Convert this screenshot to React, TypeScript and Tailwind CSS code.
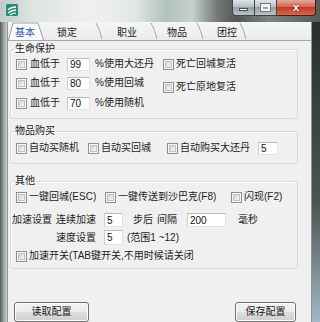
import React from "react";

const tabs = [
  { label: "基本", w: 36, wc: "w-[36px]", pc: "pl-[7px]", active: true },
  { label: "锁定", w: 59, wc: "w-[59px]", pc: "pl-[13px]", active: false },
  { label: "职业", w: 55, wc: "w-[55px]", pc: "pl-[14px]", active: false },
  { label: "物品", w: 46, wc: "w-[46px]", pc: "pl-[9px]", active: false },
  { label: "团控", w: 43, wc: "w-[43px]", pc: "pl-[13px]", active: false },
];

const CheckBox = () => (
  <span className="flex h-[11px] w-[11px] shrink-0 border border-[#8e8f8f] bg-[#f6f6f6] p-[1px]">
    <span className="h-full w-full border border-[#c2c2c2] bg-[linear-gradient(135deg,#d3d3d3,#f7f7f7)]" />
  </span>
);

const Field = ({ value, className }: { value: string; className: string }) => (
  <input
    readOnly
    value={value}
    className={`border border-[#dfe3e8] border-t-[#b7bcc3] border-l-[#c9cdd3] bg-white pl-[2px] text-[10px] leading-[10px] text-[#111] outline-none ${className}`}
  />
);

const Check = ({ label, className = "" }: { label: string; className?: string }) => (
  <div className={`flex items-center ${className}`}>
    <CheckBox />
    <span className="ml-[2px] whitespace-nowrap">{label}</span>
  </div>
);

const TitleBar = () => (
  <div className="flex h-[22px] items-start bg-[linear-gradient(90deg,#c3ccc9_0%,#dde3e1_10%,#eef1f0_28%,#e2e7e5_42%,#b2c2bb_52%,#c6d1cc_60%,#737875_68%,#535856_74%,#7d8481_84%,#555a58_100%)]">
    <svg width="14" height="14" viewBox="0 0 14 14" className="ml-[5px] mt-[3px]">
      <rect x="0.5" y="0.5" width="13" height="13" rx="2" fill="#2a8a78" stroke="#b8e4da" />
      <path d="M3 7 Q6 4 11 4" stroke="#fff" strokeWidth="1.3" fill="none" />
      <path d="M3 10 Q7 7 11 7" stroke="#fff" strokeWidth="1.3" fill="none" />
      <path d="M5 12 Q8 10 11 10" stroke="#fff" strokeWidth="1.2" fill="none" />
    </svg>
    <div className="ml-auto mr-[4px] flex">
      <div className="flex h-[16px] w-[23px] items-center justify-center rounded-bl-[4px] border border-t-0 border-[#3d4447] bg-[linear-gradient(#dfe4e6,#b3bbbf_50%,#959fa4_50%,#bac3c7)]">
        <span className="mt-[3px] h-[3px] w-[9px] border border-[#4a4f52] bg-white" />
      </div>
      <div className="flex h-[16px] w-[22px] items-center justify-center border-b border-r border-[#3d4447] bg-[linear-gradient(#dfe4e6,#b3bbbf_50%,#959fa4_50%,#bac3c7)]">
        <span className="h-[7px] w-[9px] border-2 border-t-[3px] border-[#f4f4f4] outline outline-1 outline-[#70777a]" />
      </div>
      <div className="flex h-[16px] w-[39px] items-center justify-center rounded-br-[4px] border-b border-r border-[#4a1a14] bg-[linear-gradient(#e8a597,#d0604f_50%,#bf3a28_50%,#d86a4d)]">
        <span className="text-[11px] font-bold leading-[11px] text-white [text-shadow:0_0_2px_#5a1008]">x</span>
      </div>
    </div>
  </div>
);

const Tabs = () => (
  <div className="flex h-[19px] items-end border-b border-[#a3a9ad] bg-[linear-gradient(#f4f5f5,#ececec)]">
    {tabs.map((t) => (
      <div key={t.label} className={`relative flex h-[18px] items-end pb-[1px] ${t.wc} ${t.pc}`}>
        <svg width={t.w} height="18" className="absolute left-0 top-0">
          {t.active ? (
            <path
              d={`M0.5 18 L5 1 L${t.w - 6} 1 L${t.w - 0.5} 18`}
              fill="#fbfbfb"
              stroke="#9aa0a4"
            />
          ) : (
            <path d={`M${t.w - 7} 1 Q${t.w - 3} 8 ${t.w - 1} 17`} fill="none" stroke="#a2a7aa" />
          )}
        </svg>
        <span className={`relative ${t.active ? "text-[#2a4fb4]" : ""}`}>{t.label}</span>
      </div>
    ))}
  </div>
);

const groupCls =
  "ml-[2px] w-[288px] rounded-[3px] border border-[#d5dbdf] pb-[8px] shadow-[inset_1px_1px_0_#fff]";

export default function App() {
  return (
    <div className="flex h-[322px] w-[320px] flex-col overflow-hidden font-['Liberation_Sans','Noto_Sans_CJK_SC',sans-serif] text-[10px] leading-[12px] text-[#1c1c1c]">
      <TitleBar />
      <div className="flex flex-1">
        <div className="w-[7px] bg-[linear-gradient(90deg,#545b58,#8d9693_40%,#c8d0d3)]" />
        <div className="flex w-[305px] flex-col border-x border-[#8e989d] bg-[#f0f0f0]">
          <Tabs />
          <div className="flex flex-col">
            <fieldset className={`mt-[2px] ${groupCls}`}>
              <legend className="ml-[3px] px-[1px]">生命保护</legend>
              <div className="mt-[2px] flex">
                <div className="flex w-[152px] flex-col pl-[5px]">
                  {[
                    ["99", "%使用大还丹", "mt-0"],
                    ["80", "%使用回城", "mt-[5px]"],
                    ["70", "%使用随机", "mt-[6px]"],
                  ].map(([v, l, m]) => (
                    <div key={v} className={`flex h-[14px] items-center ${m}`}>
                      <CheckBox />
                      <span className="ml-[3px] w-[37px]">血低于</span>
                      <Field value={v} className="h-[13px] w-[23px]" />
                      <span className="ml-[5px]">{l}</span>
                    </div>
                  ))}
                </div>
                <div className="flex flex-col">
                  <Check label="死亡回城复活" className="h-[14px]" />
                  <Check label="死亡原地复活" className="mt-[9px] h-[14px]" />
                </div>
              </div>
            </fieldset>

            <fieldset className={`mt-[6px] ${groupCls}`}>
              <legend className="ml-[3px] px-[1px]">物品购买</legend>
              <div className="mt-[4px] flex h-[14px] items-center pl-[5px]">
                <Check label="自动买随机" className="w-[72px]" />
                <Check label="自动买回城" className="w-[79px]" />
                <Check label="自动购买大还丹" className="w-[91px]" />
                <Field value="5" className="h-[13px] w-[20px]" />
              </div>
            </fieldset>

            <fieldset className={`mt-[11px] !pb-[5px] ${groupCls}`}>
              <legend className="ml-[3px] px-[1px]">其他</legend>
              <div className="mt-[3px] flex h-[14px] items-center pl-[5px]">
                <Check label="一键回城(ESC)" className="w-[89px]" />
                <Check label="一键传送到沙巴克(F8)" className="w-[126px]" />
                <Check label="闪现(F2)" />
              </div>
              <div className="mt-[9px] flex h-[14px] items-center pl-[1px]">
                <span className="w-[44px]">加速设置</span>
                <span className="w-[48px]">连续加速</span>
                <Field value="5" className="h-[14px] w-[19px]" />
                <span className="ml-[10px] w-[24px]">步后</span>
                <span className="w-[30px]">间隔</span>
                <Field value="200" className="h-[14px] w-[39px]" />
                <span className="ml-[12px]">毫秒</span>
              </div>
              <div className="mt-[3px] flex h-[15px] items-center pl-[45px]">
                <span className="w-[48px]">速度设置</span>
                <Field value="5" className="h-[15px] w-[19px]" />
                <span className="ml-[4px]">(范围1 ~12)</span>
              </div>
              <div className="mt-[4px] flex h-[14px] items-center pl-[5px]">
                <Check label="加速开关(TAB键开关,不用时候请关闭" />
              </div>
            </fieldset>

            <div className="mt-[33px] flex justify-between pl-[6px] pr-[15px]">
              <button className="h-[20px] w-[75px] rounded-[3px] border border-[#707070] bg-[linear-gradient(#f2f2f2,#ebebeb_50%,#dddddd_50%,#cfcfcf)] text-[10px] shadow-[inset_0_0_0_1px_#fcfcfc]">
                读取配置
              </button>
              <button className="h-[20px] w-[61px] rounded-[3px] border border-[#707070] bg-[linear-gradient(#f2f2f2,#ebebeb_50%,#dddddd_50%,#cfcfcf)] text-[10px] shadow-[inset_0_0_0_1px_#fcfcfc]">
                保存配置
              </button>
            </div>
          </div>
        </div>
        <div className="w-[8px] bg-[linear-gradient(180deg,#2a302c,#4a5551_60%,#a3b7c5)]" />
      </div>
    </div>
  );
}
